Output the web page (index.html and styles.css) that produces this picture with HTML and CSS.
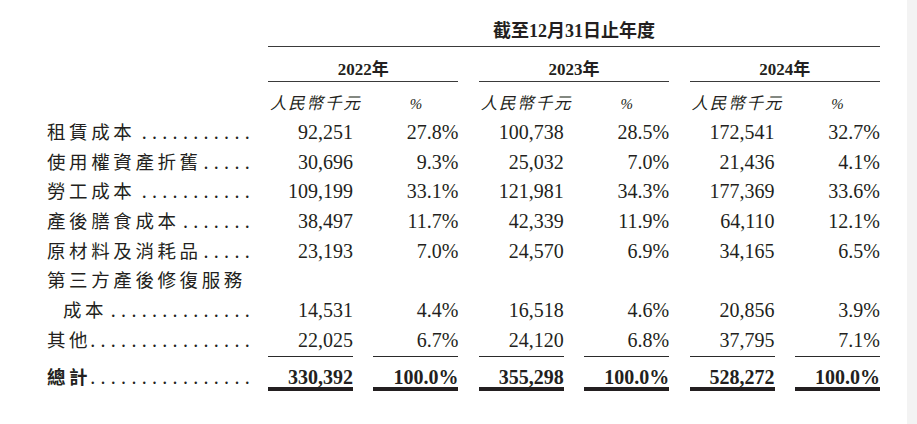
FILE: index.html
```html
<!DOCTYPE html>
<html lang="zh-Hant">
<head>
<meta charset="utf-8">
<title>成本明細</title>
<link rel="stylesheet" href="styles.css">
</head>
<body>
<div class="page">
  <div class="tbl">
    <div></div><div class="title">截至12月31日止年度</div>

    <div></div><div class="year">2022年</div><div class="year">2023年</div><div class="year">2024年</div>

    <div></div>
    <div class="unit">人民幣千元</div><div class="unit pc">%</div>
    <div class="unit">人民幣千元</div><div class="unit pc">%</div>
    <div class="unit">人民幣千元</div><div class="unit pc">%</div>

    <div class="lbl"><span class="dots">...........</span><span class="t">租賃成本</span></div>
    <div class="num">92,251</div><div class="num">27.8%</div><div class="num">100,738</div><div class="num">28.5%</div><div class="num">172,541</div><div class="num">32.7%</div>

    <div class="lbl"><span class="dots">.....</span><span class="t">使用權資產折舊</span></div>
    <div class="num">30,696</div><div class="num">9.3%</div><div class="num">25,032</div><div class="num">7.0%</div><div class="num">21,436</div><div class="num">4.1%</div>

    <div class="lbl"><span class="dots">...........</span><span class="t">勞工成本</span></div>
    <div class="num">109,199</div><div class="num">33.1%</div><div class="num">121,981</div><div class="num">34.3%</div><div class="num">177,369</div><div class="num">33.6%</div>

    <div class="lbl"><span class="dots">.......</span><span class="t">產後膳食成本</span></div>
    <div class="num">38,497</div><div class="num">11.7%</div><div class="num">42,339</div><div class="num">11.9%</div><div class="num">64,110</div><div class="num">12.1%</div>

    <div class="lbl"><span class="dots">.....</span><span class="t">原材料及消耗品</span></div>
    <div class="num">23,193</div><div class="num">7.0%</div><div class="num">24,570</div><div class="num">6.9%</div><div class="num">34,165</div><div class="num">6.5%</div>

    <div class="lbl wide"><span class="t">第三方產後修復服務</span></div>

    <div class="lbl indent"><span class="dots">..............</span><span class="t">成本</span></div>
    <div class="num">14,531</div><div class="num">4.4%</div><div class="num">16,518</div><div class="num">4.6%</div><div class="num">20,856</div><div class="num">3.9%</div>

    <div class="lbl"><span class="dots">................</span><span class="t">其他</span></div>
    <div class="num">22,025</div><div class="num">6.7%</div><div class="num">24,120</div><div class="num">6.8%</div><div class="num">37,795</div><div class="num">7.1%</div>

    <div class="lbl total-lbl"><span class="dots">................</span><span class="t">總計</span></div>
    <div class="num total">330,392</div><div class="num total">100.0%</div><div class="num total">355,298</div><div class="num total">100.0%</div><div class="num total">528,272</div><div class="num total">100.0%</div>
  </div>
</div>
</body>
</html>
```

FILE: styles.css
```css
html, body {
  margin: 0;
  padding: 0;
}

body {
  background: linear-gradient(to right, #ffffff 907px, #f3f3f3 907px);
  color: #231f20;
  font-family: "Liberation Serif", "Noto Sans CJK TC", serif;
  font-size: 20px;
}

.page {
  padding-left: 47px;
}

.tbl {
  display: grid;
  grid-template-columns: 200.6px repeat(6, 85px);
  column-gap: 20.4px;
}

.title {
  grid-column: 2 / 8;
  text-align: center;
  font-weight: 700;
  font-size: 18px;
  line-height: 22px;
  padding: 20px 0 4px;
  border-bottom: 1.3px solid #3a3a3a;
}

.year {
  grid-column: span 2;
  text-align: center;
  font-weight: 700;
  font-size: 17px;
  line-height: 22px;
  padding-top: 12px;
  border-bottom: 1.3px solid #3a3a3a;
}

.unit {
  text-align: center;
  font-style: italic;
  font-size: 16.5px;
  line-height: 22px;
  padding: 11px 0 3px 2px;
  letter-spacing: 1.8px;
  white-space: nowrap;
}

.unit.pc {
  font-size: 15px;
  letter-spacing: 0;
  padding-left: 0;
}

.lbl {
  width: 208px;
  height: 29.7px;
  line-height: 29.7px;
  white-space: nowrap;
}

.lbl.wide {
  grid-column: 1 / -1;
  width: auto;
}

.lbl.indent .t {
  padding-left: 16px;
}

.lbl .t {
  font-family: "Noto Sans CJK TC", sans-serif;
  font-size: 18.5px;
  letter-spacing: 3.6px;
  line-height: 1;
  margin-right: -3.6px;
}

.dots {
  float: right;
  letter-spacing: 5.3px;
}

.num {
  text-align: right;
  height: 29.7px;
  line-height: 29.7px;
  white-space: nowrap;
}

.total-lbl {
  height: auto;
  padding-top: 11.3px;
  line-height: 20.3px;
}

.total-lbl .t {
  font-weight: 700;
}

.total-lbl .dots {
  line-height: 20.3px;
}

.num.total {
  height: auto;
  font-weight: 700;
  line-height: 20.3px;
  padding-top: 10.3px;
  border-top: 1px solid #2a2a2a;
  border-bottom: 4px solid #231f20;
  box-shadow: 0 2px 0 #ffffff, 0 3.6px 0 #3a3a3a;
}
```
